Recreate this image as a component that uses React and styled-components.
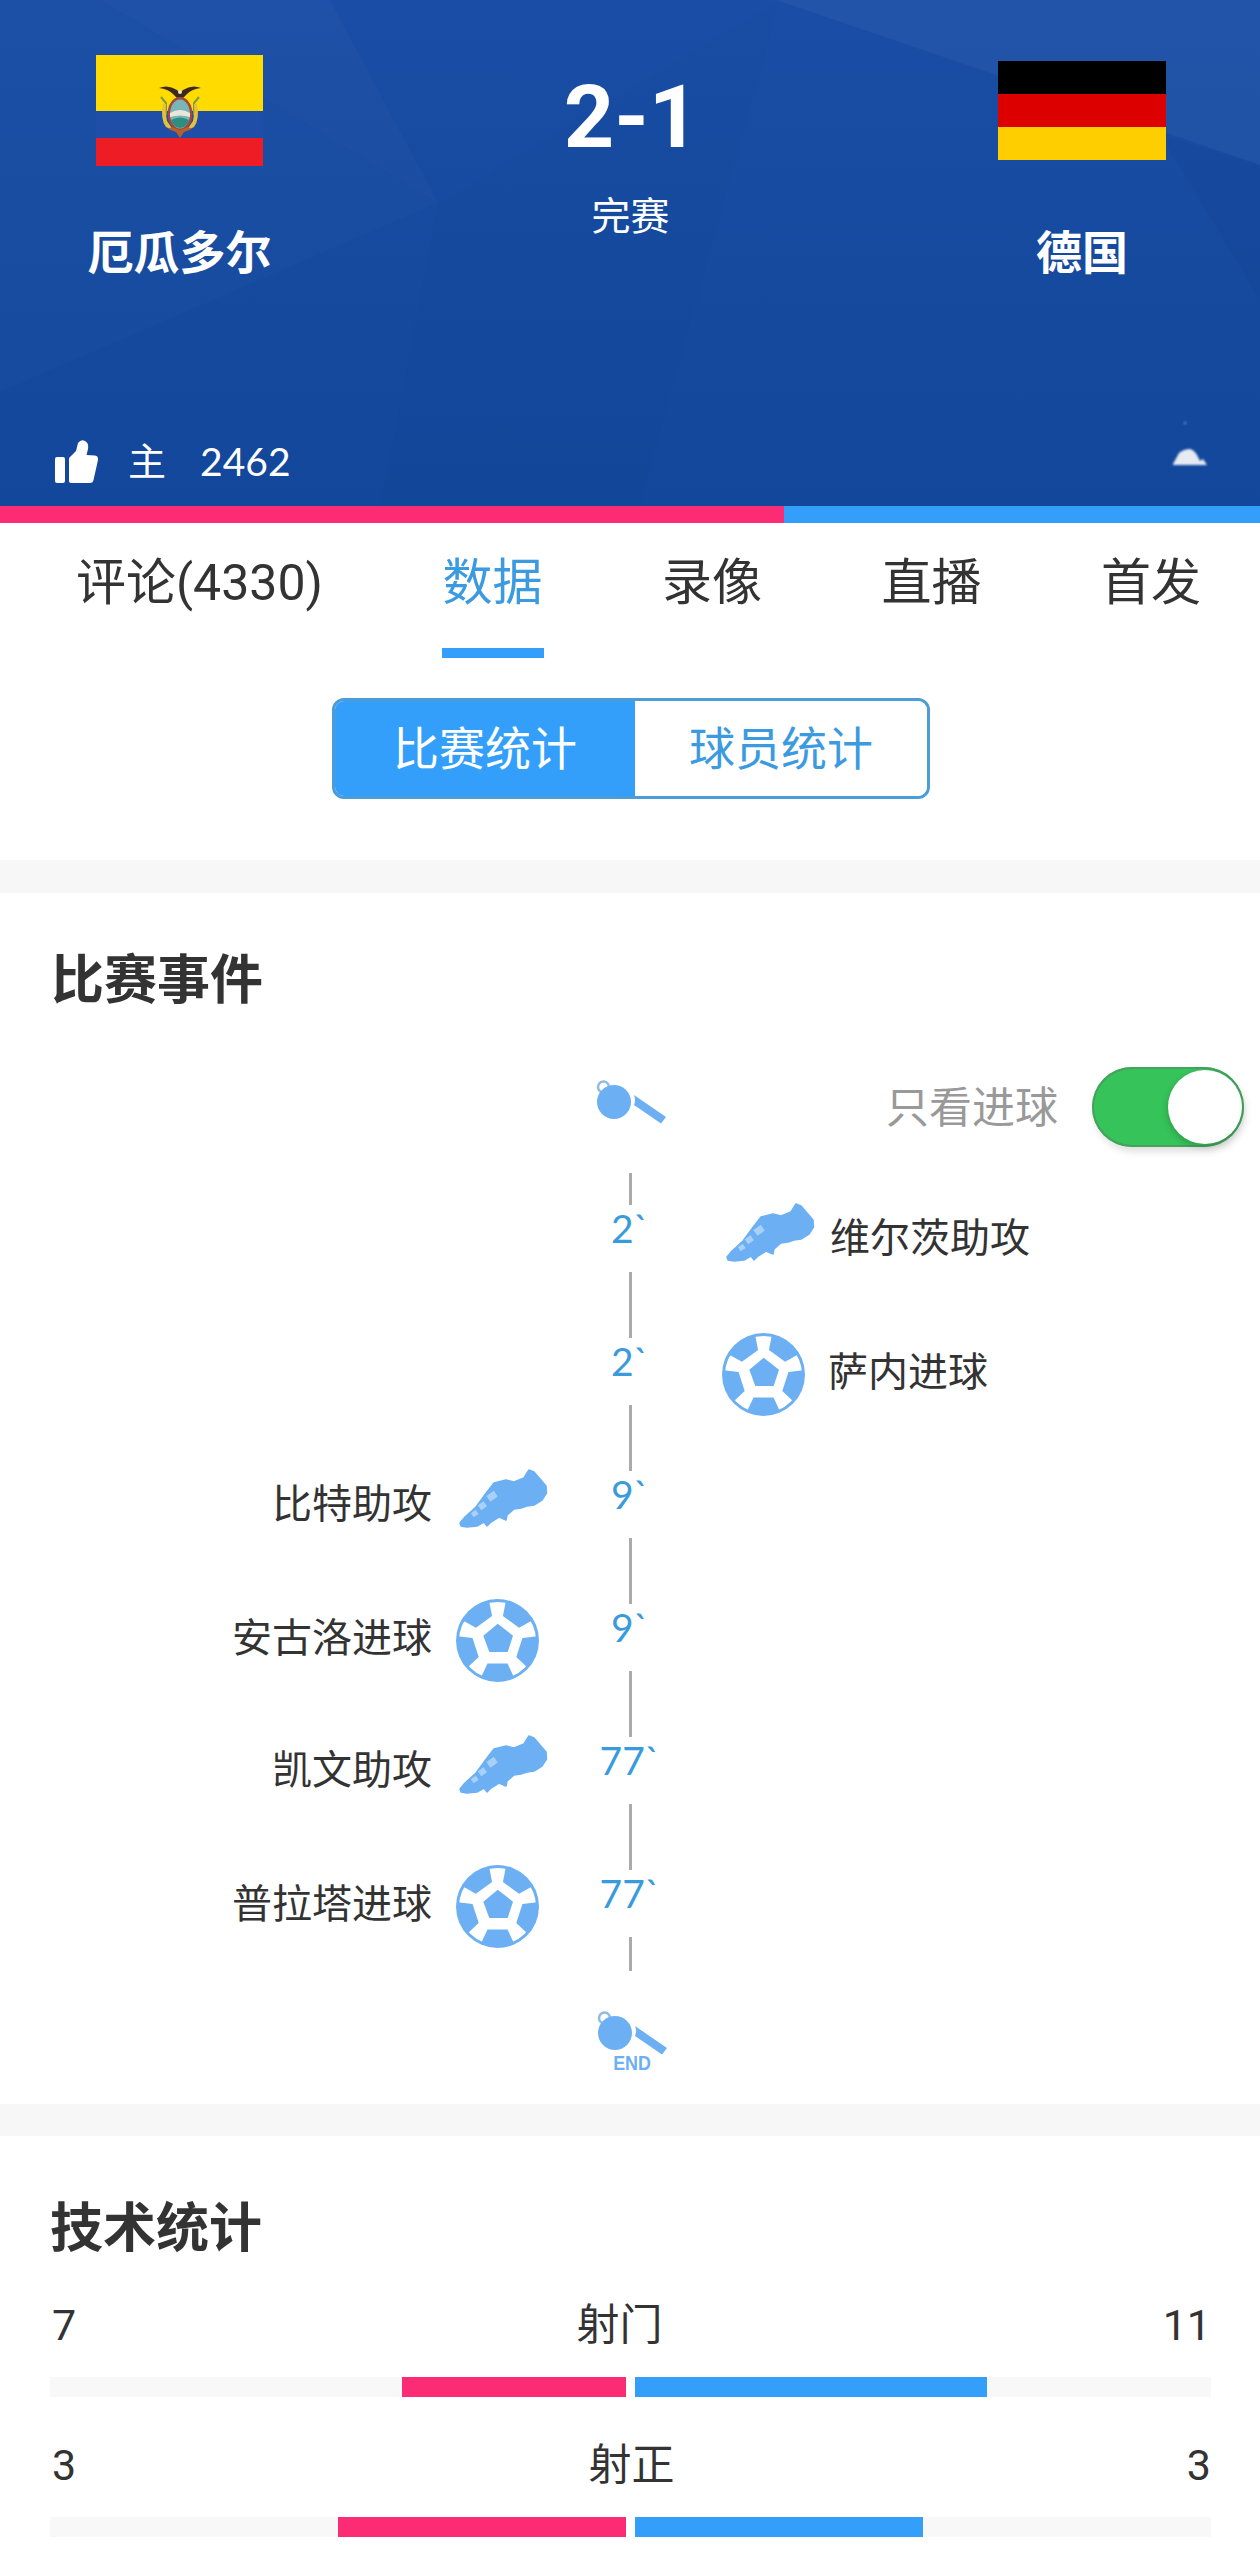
import React from "react";
import styled, { createGlobalStyle } from "styled-components";

const PINK = "#fb2c73";
const BLUE = "#349ffa";
const ICON = "#6cb0f3";

const GlobalStyle = createGlobalStyle`
  html, body {
    margin: 0;
    padding: 0;
    background: #fff;
  }
  body {
    font-family: Roboto, "Noto Sans CJK SC", sans-serif;
    color: #333;
  }
`;

const Page = styled.div`
  width: 1260px;
  height: 2557px;
  overflow: hidden;
  background: #fff;
`;

/* header */
const Header = styled.header`
  position: relative;
  height: 506px;
  display: flex;
  flex-direction: column;
  overflow: hidden;
  background: linear-gradient(180deg, #1a4ea6 0%, #164a9f 55%, #13479b 100%);
  color: #fff;
`;
const Facets = styled.svg`
  position: absolute;
  inset: 0;
  width: 100%;
  height: 100%;
`;
const Match = styled.div`
  position: relative;
  display: grid;
  grid-template-columns: 167px 1fr 168px;
  padding: 0 94px 0 96px;
`;
const Team = styled.div`
  display: flex;
  flex-direction: column;
  align-items: center;
  padding-top: 55px;
`;
const FlagSlot = styled.div`
  height: 111px;
  width: 100%;
  display: flex;
  align-items: center;
`;
const Flag = styled.div`
  position: relative;
  width: 100%;
  height: ${(p) => p.$height}px;
  display: flex;
  flex-direction: column;
`;
const Stripe = styled.div`
  flex: ${(p) => p.$size} 0 0;
  background: ${(p) => p.$color};
`;
const Coat = styled.svg`
  position: absolute;
  left: 62px;
  top: 28px;
  width: 44px;
  height: 55px;
`;
const TeamName = styled.div`
  margin-top: 57px;
  font-size: 46px;
  line-height: 60px;
  font-weight: 700;
  white-space: nowrap;
`;
const Result = styled.div`
  display: flex;
  flex-direction: column;
  align-items: center;
  padding-top: 72px;
`;
const Score = styled.div`
  font-size: 88px;
  line-height: 90px;
  font-weight: 700;
  padding-left: 2px;
`;
const Status = styled.div`
  margin-top: 30px;
  font-size: 39px;
  line-height: 50px;
`;
const LikeRow = styled.div`
  position: relative;
  margin-top: auto;
  display: flex;
  align-items: center;
  height: 50px;
  margin-bottom: 20px;
  padding-left: 55px;
`;
const LikeSide = styled.span`
  margin-left: 30px;
  padding-bottom: 6px;
  font-size: 38px;
`;
const LikeCount = styled.span`
  margin-left: 34px;
  font-family: "Lato", sans-serif;
  font-size: 39px;
`;
const Smudge = styled.svg`
  position: absolute;
  right: 50px;
  bottom: 19px;
  width: 40px;
  height: 50px;
  filter: blur(0.8px);
`;
const ScoreBar = styled.div`
  display: flex;
  height: 17px;
`;
const BarPart = styled.div`
  background: ${(p) => p.$color};
  width: ${(p) => p.$width}px;
  flex: ${(p) => (p.$grow ? 1 : "none")};
`;

/* tabs */
const Tabs = styled.nav`
  display: flex;
  justify-content: space-between;
  height: 135px;
  padding: 25px 59px 0 76px;
  box-sizing: border-box;
`;
const Tab = styled.div`
  position: relative;
  height: 70px;
  font-size: 50px;
  line-height: 70px;
  white-space: nowrap;
  color: ${(p) => (p.$active ? "#3c9be0" : "#333")};
  ${(p) =>
    p.$active &&
    `
    &::after {
      content: "";
      position: absolute;
      left: 0;
      right: -2px;
      top: 100px;
      height: 10px;
      background: ${BLUE};
    }
  `}
`;
const Segment = styled.div`
  width: 598px;
  height: 101px;
  margin: 40px 0 61px 332px;
  box-sizing: border-box;
  display: flex;
  border: 3px solid #4c9cd8;
  border-radius: 12px;
  overflow: hidden;
`;
const SegmentItem = styled.div`
  flex: ${(p) => (p.$active ? "0 0 300px" : "1")};
  display: flex;
  align-items: center;
  justify-content: center;
  padding-bottom: 7px;
  font-size: 46px;
  background: ${(p) => (p.$active ? BLUE : "#fff")};
  color: ${(p) => (p.$active ? "#fff" : "#3c9be0")};
`;
const Band = styled.div`
  height: ${(p) => p.$height}px;
  background: #f7f7f7;
`;

/* events */
const SectionTitle = styled.h2`
  margin: 0;
  padding-left: 51px;
  font-size: 53px;
  line-height: 70px;
  font-weight: 700;
  color: #333;
`;
const Events = styled.section`
  height: 1211px;
  padding-top: 53px;
  box-sizing: border-box;
`;
const TimelineGrid = styled.div`
  display: grid;
  grid-template-columns: 1fr 132px 1fr;
`;
const StartRow = styled(TimelineGrid)`
  margin-top: 51px;
  height: 80px;
`;
const WhistleCell = styled.div`
  grid-column: 2;
  display: flex;
  justify-content: center;
  padding-top: 13px;
  padding-left: 2px;
`;
const FilterCell = styled.div`
  grid-column: 3;
  display: flex;
  justify-content: flex-end;
  align-items: center;
  padding-right: 16px;
`;
const FilterLabel = styled.span`
  font-size: 43px;
  padding-bottom: 6px;
  color: #999;
  margin-right: 34px;
`;
const Toggle = styled.div`
  position: relative;
  width: 152px;
  height: 80px;
  border-radius: 40px;
  background: #36c35a;
  box-shadow: inset 0 0 0 2px #45a25f, 2px 5px 7px rgba(0, 0, 0, 0.12);
`;
const Knob = styled.div`
  position: absolute;
  right: 2px;
  top: 3px;
  width: 74px;
  height: 74px;
  border-radius: 50%;
  background: #fff;
  box-shadow: -1px 3px 6px rgba(0, 0, 0, 0.18);
`;
const Rows = styled.div`
  margin-top: 26px;
`;
const LineCell = styled(TimelineGrid)`
  height: ${(p) => p.$height}px;
`;
const Line = styled.div`
  grid-column: 2;
  justify-self: center;
  width: 3px;
  background: #aaa;
`;
const EventRow = styled(TimelineGrid)`
  height: 66.5px;
`;
const EventSide = styled.div`
  display: flex;
  align-items: center;
  height: 66px;
  font-size: 40px;
  color: #333;
  white-space: nowrap;
  justify-content: ${(p) => (p.$left ? "flex-end" : "flex-start")};
`;
const EventText = styled.span`
  padding-bottom: ${(p) => (p.$goal ? 5 : 7)}px;
`;
const LeftIcons = styled.div`
  width: 132px;
  flex: none;
`;
const Time = styled.div`
  text-align: center;
  font-family: "Lato", sans-serif;
  font-size: 39px;
  line-height: 46px;
  color: #3a9bdc;
`;
const EndWhistle = styled.div`
  display: flex;
  justify-content: center;
  position: relative;
  margin-top: 40px;
  padding-left: 4px;
`;
const EndMark = styled.div`
  position: absolute;
  left: 50%;
  top: 40px;
  transform: translateX(-50%) scaleX(0.85);
  margin-left: 2px;
  font-family: "Liberation Sans", sans-serif;
  font-weight: 700;
  font-size: 21px;
  line-height: 24px;
  color: ${ICON};
`;
const IconBox = styled.svg`
  display: block;
  flex: none;
  margin-top: ${(p) => p.$shift || 0}px;
  margin-left: ${(p) => p.$ml || 0}px;
  margin-right: ${(p) => p.$mr || 0}px;
`;

/* stats */
const Stats = styled.section`
  padding: 58px 49px 0 50px;
`;
const StatsTitle = styled(SectionTitle)`
  padding-left: 0;
  margin-bottom: 31px;
`;
const Stat = styled.div`
  margin-bottom: 38px;
`;
const StatHead = styled.div`
  display: flex;
  justify-content: space-between;
  padding: 0 0 0 2px;
  font-size: 43px;
  line-height: 60px;
  color: #333;
`;
const Track = styled.div`
  display: flex;
  gap: 9px;
  margin-top: 22px;
  height: 20px;
`;
const TrackHalf = styled.div`
  flex: 1;
  display: flex;
  justify-content: ${(p) => (p.$left ? "flex-end" : "flex-start")};
  background: #f8f8f8;
`;
const Fill = styled.div`
  background: ${(p) => p.$color};
`;

const Whistle = () => (
  <IconBox width="70" height="44" viewBox="0 0 70 44">
    <circle cx="7.5" cy="7" r="5.5" fill="none" stroke="#8fbbe4" strokeWidth="2.5" />
    <circle cx="18" cy="22" r="17" fill={ICON} />
    <path d="M38 15 L70 37 L65 43.5 L38 25 Q40 20 38 15 Z" fill={ICON} />
  </IconBox>
);

const Boot = ({ ml, mr }) => (
  <IconBox width="90" height="60" viewBox="-1 -1 90 60" $shift={-10} $ml={ml} $mr={mr}>
    <path
      d="M70 0 L75 2 L87 16 L87.5 23 L83 30 L75 35 L68 36 L62 38 L55 39 L48 45 L47 50 L40 47 L32 52 L28 56 L25 52 L18 56 L8 57 L2 56 L1 53 L6 47 L17 37 L28 22 L35 13 L47 10 L55 12 L65 8 L68 3 Z"
      fill={ICON}
      stroke={ICON}
      strokeWidth="1.5"
      strokeLinejoin="round"
    />
    <g fill="#a8d0f8">
      <rect x="29" y="23" width="9" height="7" transform="rotate(-35 33 27)" />
      <rect x="20" y="33" width="7" height="6" transform="rotate(-35 23 36)" />
      <rect x="13" y="41" width="6" height="5" transform="rotate(-35 16 44)" />
    </g>
  </IconBox>
);

const Ball = ({ ml, mr }) => (
  <IconBox width="83" height="83" viewBox="0 0 83 83" $shift={6} $ml={ml} $mr={mr}>
    <circle cx="41.5" cy="41.5" r="41.5" fill={ICON} />
    <circle cx="41.5" cy="41.5" r="38.5" fill="#fff" />
    {[36, 108, 180, 252, 324].map((angle) => (
      <path
        key={angle}
        d="M25.2 5 A40 40 0 0 1 57.8 5 L51.5 18.5 L31.5 18.5 Z"
        fill={ICON}
        transform={`rotate(${angle} 41.5 41.5)`}
      />
    ))}
    <path d="M41.7 24.7 L57 36.7 L51.7 53 L33.3 53 L27.3 36.7 Z" fill={ICON} />
  </IconBox>
);

const Thumb = () => (
  <IconBox width="43" height="43" viewBox="0 0 43 43">
    <rect x="0" y="17" width="10" height="26" rx="2" fill="#fff" />
    <path
      d="M14 41 L14 18 L21 11 L23 3 Q26 -1 30 1 Q34 3 33 9 L31.5 15 L40 15.5 Q43.5 16 43 20 L38.5 40 Q38 43 35 43 L16 43 Q14 43 14 41 Z"
      fill="#fff"
    />
  </IconBox>
);

const ShieldCoat = () => (
  <Coat viewBox="0 0 44 55">
    <path d="M1 5 Q10 1 19 7 L22 10 L25 7 Q34 1 43 5 Q34 6 29 11 L24 16 L20 16 L15 11 Q10 6 1 5 Z" fill="#3d2a1c" />
    <circle cx="22" cy="9" r="2" fill="#e8e4d8" />
    <path d="M3 14 L8 20 L8 32 M41 14 L36 20 L36 32" stroke="#7c9a4a" strokeWidth="2" fill="none" />
    <path d="M5 21 Q2 36 8 44 L16 48 L9 38 Q7 30 8 21 Z M39 21 Q42 36 36 44 L28 48 L35 38 Q37 30 36 21 Z" fill="#e4c13a" />
    <ellipse cx="22" cy="31" rx="12.5" ry="17" fill="#a5453f" />
    <ellipse cx="22" cy="31" rx="10" ry="14.5" fill="#79b6b5" />
    <path d="M12 30 Q22 24 32 30 L32 34 Q22 31 12 34 Z" fill="#e9e6da" />
    <path d="M13 37 Q22 32 31 37 Q29 44 22 45 Q15 44 13 37 Z" fill="#2f8d7d" />
    <path d="M10 46 L18 49 L22 55 L26 49 L34 46 L30 44 L22 47 L14 44 Z" fill="#b5622a" />
  </Coat>
);

const events = [
  { time: "2", side: "right", kind: "assist", text: "维尔茨助攻" },
  { time: "2", side: "right", kind: "goal", text: "萨内进球" },
  { time: "9", side: "left", kind: "assist", text: "比特助攻" },
  { time: "9", side: "left", kind: "goal", text: "安古洛进球" },
  { time: "77", side: "left", kind: "assist", text: "凯文助攻" },
  { time: "77", side: "left", kind: "goal", text: "普拉塔进球" },
];

const stats = [
  { label: "射门", home: 7, away: 11 },
  { label: "射正", home: 3, away: 3 },
];

const tabs = ["评论(4330)", "数据", "录像", "直播", "首发"];

function App() {
  return (
    <Page>
      <GlobalStyle />
      <Header>
        <Facets viewBox="0 0 1260 506" preserveAspectRatio="none">
          <polygon points="776,0 1260,0 1260,165" fill="#fff" opacity="0.035" />
          <polygon points="100,0 330,0 438,203" fill="#fff" opacity="0.02" />
          <polygon points="0,0 100,0 438,203 0,392" fill="#fff" opacity="0.012" />
          <polygon points="1160,135 1260,165 1260,300" fill="#000" opacity="0.02" />
          <polygon points="438,203 780,0 640,506 380,506" fill="#000" opacity="0.01" />
        </Facets>
        <Match>
          <Team>
            <FlagSlot>
              <Flag $height={111}>
                <Stripe $size={56} $color="#ffdb00" />
                <Stripe $size={27} $color="#1e4ea8" />
                <Stripe $size={28} $color="#ee1c25" />
                <ShieldCoat />
              </Flag>
            </FlagSlot>
            <TeamName>厄瓜多尔</TeamName>
          </Team>
          <Result>
            <Score>2-1</Score>
            <Status>完赛</Status>
          </Result>
          <Team>
            <FlagSlot>
              <Flag $height={100}>
                <Stripe $size={1} $color="#000" />
                <Stripe $size={1} $color="#dd0000" />
                <Stripe $size={1} $color="#ffce00" />
              </Flag>
            </FlagSlot>
            <TeamName>德国</TeamName>
          </Team>
        </Match>
        <LikeRow>
          <Thumb />
          <LikeSide>主</LikeSide>
          <LikeCount>2462</LikeCount>
          <Smudge viewBox="0 0 40 50">
            <path d="M3 47 L9 36 Q14 32 20 32 Q24 33 27 38 L30 44 L33 42 L37 48 L3 48 Z" fill="#e6ebf2" />
            <circle cx="15" cy="6" r="1.5" fill="#5d80bb" />
          </Smudge>
        </LikeRow>
      </Header>
      <ScoreBar>
        <BarPart $color={PINK} $width={784} />
        <BarPart $color={BLUE} $grow />
      </ScoreBar>

      <Tabs>
        {tabs.map((tab) => (
          <Tab key={tab} $active={tab === "数据"}>
            {tab}
          </Tab>
        ))}
      </Tabs>
      <Segment>
        <SegmentItem $active>比赛统计</SegmentItem>
        <SegmentItem>球员统计</SegmentItem>
      </Segment>
      <Band $height={33} />

      <Events>
        <SectionTitle>比赛事件</SectionTitle>
        <StartRow>
          <WhistleCell>
            <Whistle />
          </WhistleCell>
          <FilterCell>
            <FilterLabel>只看进球</FilterLabel>
            <Toggle>
              <Knob />
            </Toggle>
          </FilterCell>
        </StartRow>
        <Rows>
          <LineCell $height={32}>
            <Line />
          </LineCell>
          {events.map((event, index) => (
            <React.Fragment key={index}>
              <EventRow>
                <EventSide $left>
                  {event.side === "left" && (
                    <>
                      <EventText $goal={event.kind === "goal"}>{event.text}</EventText>
                      <LeftIcons>
                        {event.kind === "goal" ? <Ball ml={24} /> : <Boot ml={26} />}
                      </LeftIcons>
                    </>
                  )}
                </EventSide>
                <Time>{event.time}`</Time>
                <EventSide>
                  {event.side === "right" && (
                    <>
                      {event.kind === "goal" ? <Ball ml={26} mr={23} /> : <Boot ml={29} mr={15} />}
                      <EventText $goal={event.kind === "goal"}>{event.text}</EventText>
                    </>
                  )}
                </EventSide>
              </EventRow>
              <LineCell $height={index === events.length - 1 ? 34 : 66.5}>
                <Line />
              </LineCell>
            </React.Fragment>
          ))}
        </Rows>
        <EndWhistle>
          <Whistle />
          <EndMark>END</EndMark>
        </EndWhistle>
      </Events>
      <Band $height={32} />

      <Stats>
        <StatsTitle>技术统计</StatsTitle>
        {stats.map((stat) => {
          const total = stat.home + stat.away;
          return (
            <Stat key={stat.label}>
              <StatHead>
                <span>{stat.home}</span>
                <span>{stat.label}</span>
                <span>{stat.away}</span>
              </StatHead>
              <Track>
                <TrackHalf $left>
                  <Fill $color={PINK} style={{ width: `${(stat.home / total) * 100}%` }} />
                </TrackHalf>
                <TrackHalf>
                  <Fill $color={BLUE} style={{ width: `${(stat.away / total) * 100}%` }} />
                </TrackHalf>
              </Track>
            </Stat>
          );
        })}
      </Stats>
    </Page>
  );
}

export default App;
